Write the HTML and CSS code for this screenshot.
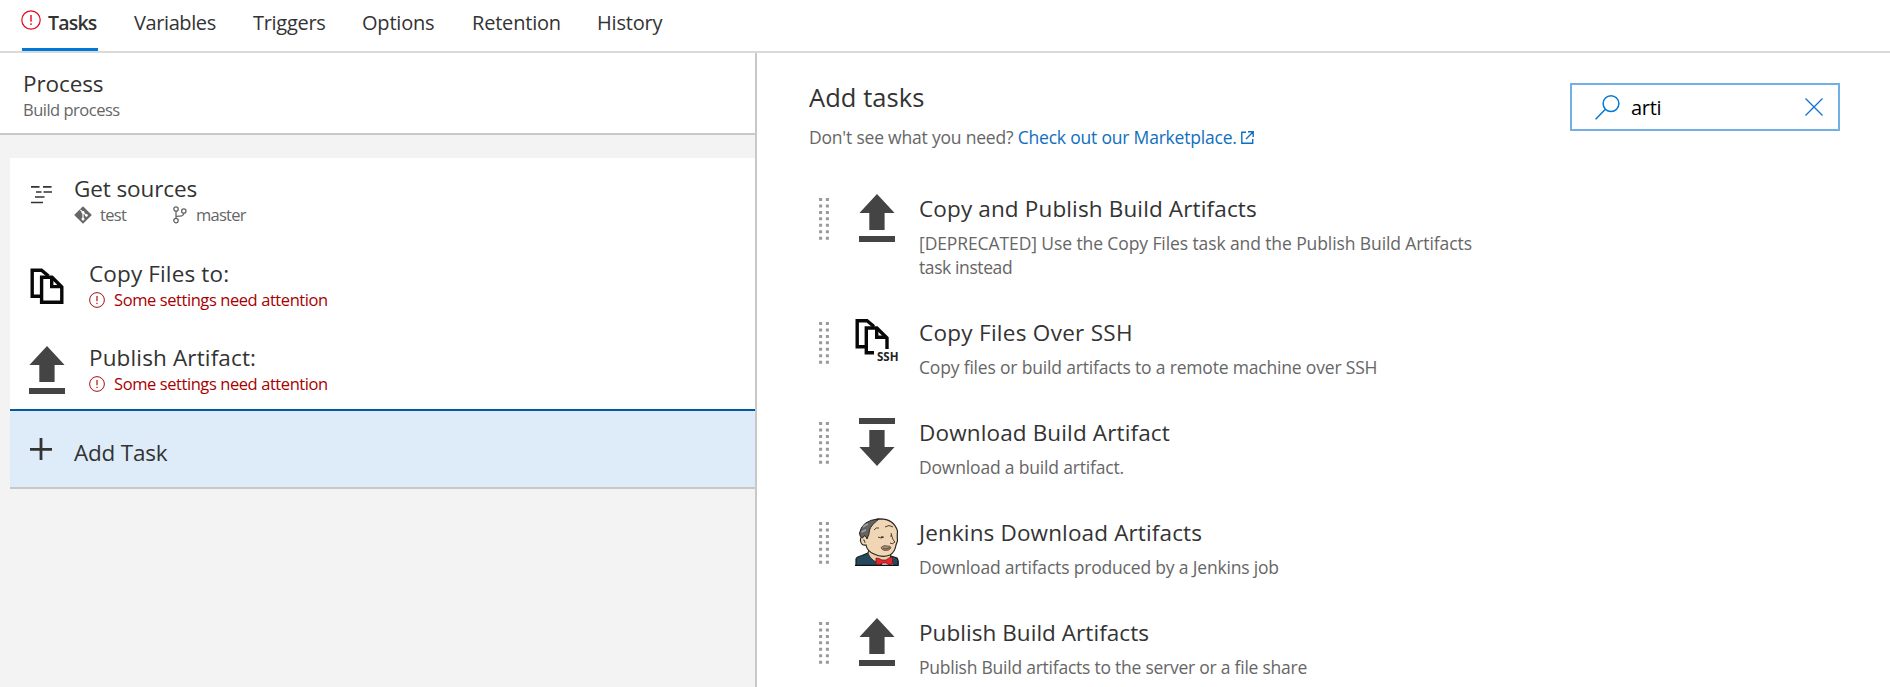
FILE: index.html
```html
<!DOCTYPE html>
<html lang="en">
<head>
<meta charset="utf-8">
<title>Build definition</title>
<link rel="stylesheet" href="styles.css">
</head>
<body>
<svg class="defs" width="0" height="0" aria-hidden="true">
  <symbol id="alert" viewBox="0 0 20 20"><circle cx="10" cy="10" r="9.2" fill="none" stroke="currentColor" stroke-width="1.2"/><path d="M10 5v6.7M10 13.3v1.7" stroke="currentColor" stroke-width="1.4"/></symbol>
  <symbol id="upload" viewBox="0 0 36 48"><path fill="#444" d="M18 0 35.6 19H25.6V36H10.3V19H.4zM0 42H36V48H0z"/></symbol>
  <symbol id="download" viewBox="0 0 36 48"><path fill="#444" d="M18 48 35.6 29H25.6V12H10.3V29H.4zM0 0H36V6H0z"/></symbol>
  <symbol id="copy" viewBox="0 0 34 37"><g fill="none" stroke="#080808" stroke-width="3.4"><path d="M10 28.2H2.2V2.2H11.5L18.5 8"/><path d="M11.6 9.2H22L31.8 19V34.3H11.6z"/><path d="M21.7 9.5V18.6H31.5"/></g></symbol>
  <symbol id="grip" viewBox="0 0 10 43"><path stroke="#999" stroke-width="3" stroke-dasharray="3 3.45" d="M1.6 0V43M8.4 0V43"/></symbol>
</svg>

<nav class="tabs">
  <a class="tab tab-tasks"><svg class="tab-alert"><use href="#alert"/></svg><span>Tasks</span></a>
  <a class="tab tab-variables">Variables</a>
  <a class="tab tab-triggers">Triggers</a>
  <a class="tab tab-options">Options</a>
  <a class="tab tab-retention">Retention</a>
  <a class="tab tab-history">History</a>
</nav>

<main class="editor">
  <section class="pipeline">
    <header class="process">
      <div class="title plain">Process</div>
      <div class="sub">Build process</div>
    </header>
    <div class="steps">
      <div class="step sources">
        <svg class="sources-icon" viewBox="0 0 21 19"><path d="M0 1.8H8.5M12 1.8H20.5M5 7H10.5M12.5 7H21M4 12H13.5M0 17.5H12" stroke="#333" stroke-width="1.7"/></svg>
        <div>
          <div class="title plain">Get sources</div>
          <div class="sub repo">
            <svg class="git-icon" viewBox="0 0 18 18"><path fill="#666" d="M9 .2 17.8 9 9 17.8.2 9z"/><path d="M6.4 3.8 9 6.4V13M9 6.5 12.4 9.4" fill="none" stroke="#fff" stroke-width="1.2"/><circle cx="9" cy="6.3" r="1.4" fill="#fff"/><circle cx="9" cy="13" r="1.5" fill="#fff"/><circle cx="12.4" cy="9.4" r="1.4" fill="#fff"/></svg>
            <span class="repo-name">test</span>
            <svg class="branch-icon" viewBox="0 0 14 18"><g fill="none" stroke="#666" stroke-width="1.3"><circle cx="3" cy="3" r="2.2"/><circle cx="3" cy="14.6" r="2.2"/><circle cx="10.8" cy="5" r="2.2"/><path d="M3 5.2V12.4M10.8 7.2C10.8 10.3 8 10.3 3.2 10.3"/></g></svg>
            <span class="branch-name">master</span>
          </div>
        </div>
      </div>
      <div class="step">
        <svg class="step-icon copy-step"><use href="#copy"/></svg>
        <div>
          <div class="title">Copy Files to:</div>
          <div class="sub warn"><svg class="warn-icon"><use href="#alert"/></svg>Some settings need attention</div>
        </div>
      </div>
      <div class="step">
        <svg class="step-icon publish-step"><use href="#upload"/></svg>
        <div>
          <div class="title">Publish Artifact:</div>
          <div class="sub warn"><svg class="warn-icon"><use href="#alert"/></svg>Some settings need attention</div>
        </div>
      </div>
      <div class="add-task">
        <svg class="plus" viewBox="0 0 22 22"><path d="M0 11.4H22M11 0V22" stroke="#333" stroke-width="2.8"/></svg>
        <div class="title plain">Add Task</div>
      </div>
    </div>
  </section>

  <section class="catalog">
    <header class="catalog-head">
      <div>
        <h1>Add tasks</h1>
        <p class="hint">Don't see what you need? <a>Check out our Marketplace.<svg class="external" viewBox="0 0 13 13"><path d="M5 1.3H.8V12.2H11.7V8M7 .8H12.2V6M12 1 5 8" fill="none" stroke="currentColor" stroke-width="1.4"/></svg></a></p>
      </div>
      <div class="search">
        <svg class="glass" viewBox="0 0 25 25"><g fill="none" stroke="#0078d7" stroke-width="1.5"><circle cx="16" cy="8.6" r="7.9"/><path d="M10.4 14.3.6 24.2"/></g></svg>
        <span>arti</span>
        <svg class="clear" viewBox="0 0 18 18"><path d="M.5.5 17.5 17.5M17.5.5.5 17.5" stroke="#0f6fd0" stroke-width="1.2"/></svg>
      </div>
    </header>

    <article class="task">
      <svg class="grip"><use href="#grip"/></svg>
      <svg class="task-icon"><use href="#upload"/></svg>
      <div><div class="title">Copy and Publish Build Artifacts</div>
      <p class="desc long">[DEPRECATED] Use the Copy Files task and the Publish Build Artifacts<br><span class="tight">task instead</span></p></div>
    </article>
    <article class="task">
      <svg class="grip"><use href="#grip"/></svg>
      <svg class="ssh-icon" viewBox="0 0 44 48"><g fill="none" stroke="#080808" stroke-width="3.4"><path d="M10 28.7H2.2V2.7H12L19 8.5"/><path d="M19 34.8H11.3V10H21.8L32 20V31"/><path d="M21.7 10V19.2H31.5"/></g><text x="22" y="43" textLength="21.500" lengthAdjust="spacingAndGlyphs" class="ssh-text">SSH</text></svg>
      <div><div class="title wide">Copy Files Over SSH</div>
      <p class="desc">Copy files or build artifacts to a remote machine over SSH</p></div>
    </article>
    <article class="task">
      <svg class="grip"><use href="#grip"/></svg>
      <svg class="task-icon"><use href="#download"/></svg>
      <div><div class="title">Download Build Artifact</div>
      <p class="desc">Download a build artifact.</p></div>
    </article>
    <article class="task">
      <svg class="grip"><use href="#grip"/></svg>
      <svg class="jenkins-icon" viewBox="0 0 44 48">
        <path d="M1 47.5V41Q2 38.5 7 37.5L15 34 36 38 42 40Q44 43 43 47.5z" fill="#24495f" stroke="#181818" stroke-width="1.2"/>
        <path d="M14 29 13 36Q17 44 27 46L36 43 35 34z" fill="#e9cfac" stroke="#2b2622"/>
        <path d="M9 18Q5 18 5.500 23 6.500 28 11 27 12 33 19 36 27 40 35 37 40 34 41 27L42.500 23Q42 18 42.500 13 39 1 25 .8 12 1 9 18z" fill="#f0d6b4" stroke="#2b2622" stroke-width="1.2"/>
        <path d="M24 1Q7 2 4.500 15 4.500 19 7.500 20L9.500 17.500Q11.500 18.500 12 21 14.500 16 14.500 12 16 7 24 1z" fill="#646464" stroke="#252525"/>
        <path d="M8 9Q10 7 13 6M6.500 14 11 12" fill="none" stroke="#a5a5a5" stroke-width="1.4"/>
        <path d="M19 12Q21 9 24 10M30 9Q34 6 38 9M23 19Q26 21 29 19M36 15Q38 23 40 24 37 27 35 25M8 22Q10 21 10 25" fill="none" stroke="#3c3028" stroke-width=".9"/>
        <path d="M26 29.500Q29 26.500 32 28 36 27.500 36 30 34 33 30 32.500 26.500 32 26 29.500z" fill="#a88c74" stroke="#5c4a3e" stroke-width=".8"/>
        <path d="M28 30.700Q32 31.500 35 29.700" fill="none" stroke="#4a3a30" stroke-width=".8"/><circle cx="27" cy="19" r=".9" fill="#333"/><circle cx="36" cy="18" r=".8" fill="#333"/>
        <path d="M27 47.500V42L36 41 38 47.500z" fill="#e8eaec"/>
        <path d="M21 40Q24 40 27 42L31 42Q36 38 37.500 40V46Q34 48 31 45L28 45Q24 48 21 47z" fill="#e3272c" stroke="#7a1519" stroke-width=".8"/>
        <path d="M0 47.400H43.500" stroke="#111" stroke-width="1.4"/>
      </svg>
      <div><div class="title">Jenkins Download Artifacts</div>
      <p class="desc">Download artifacts produced by a Jenkins job</p></div>
    </article>
    <article class="task">
      <svg class="grip"><use href="#grip"/></svg>
      <svg class="task-icon"><use href="#upload"/></svg>
      <div><div class="title snug">Publish Build Artifacts</div>
      <p class="desc snug">Publish Build artifacts to the server or a file share</p></div>
    </article>
  </section>
</main>
</body>
</html>
```
FILE: styles.css
```css
*{box-sizing:border-box}
body{margin:0;height:687px;overflow:hidden;display:flex;flex-direction:column;background:#fff;color:#333;font-family:"Open Sans","Noto Sans",sans-serif}
svg{display:block;flex:none;overflow:visible}
.defs{display:none}
h1,p{margin:0;font-weight:400}

.tabs{height:53px;flex:none;display:flex;gap:36px;padding:8px 0 0 22px;border-bottom:2px solid #d9d9d9}
.tab{height:43px;font-size:20px;line-height:30px;letter-spacing:-.2px;white-space:nowrap}
.tab-tasks{width:76px;display:flex;gap:7px;border-bottom:3px solid #0078d7;font-size:19.5px;font-weight:600;letter-spacing:-.8px}
.tab-alert{width:20px;height:20px;margin:2px 0 0 -1px;color:#e00b1c}
.tab-variables{width:83px;letter-spacing:-.4px}
.tab-triggers{width:73px;letter-spacing:-.3px}
.tab-options{width:74px}
.tab-retention{width:89px}
.tab-history{width:66px}

.editor{flex:1;min-height:0;display:flex}
.pipeline{width:757px;flex:none;border-right:2px solid #c8c8c8;background:#f3f3f3}
.process{height:82px;padding:17px 0 0 23px;background:#fff;border-bottom:2px solid #c8c8c8}
.title{font-size:22.5px;line-height:28px;letter-spacing:.14px;white-space:nowrap}
.title.plain{letter-spacing:-.1px}
.title.wide{letter-spacing:.28px}
.title.snug{letter-spacing:.05px}
.sub{font-size:16.5px;line-height:24px;letter-spacing:-.5px;color:#666;white-space:nowrap}
.steps{margin:23px 0 0 10px;background:#fff}
.step{height:84px;padding:17px 0 0 18px;display:flex}
.step>div{margin-left:6px}
.step.sources{height:85px}
.sources .sources-icon{width:21px;height:19px;margin:10px 17px 0 3px}
.step.sources>div{margin-left:5px}
.repo{display:flex;align-items:center}
.git-icon{width:18px;height:18px;margin-right:8px}
.repo-name{width:73px;letter-spacing:-.7px}
.branch-icon{width:14px;height:18px;margin-right:9px}
.branch-name{letter-spacing:-.75px}
.copy-step{width:34px;height:37px;margin:8px 19px 0 2px}
.publish-step{width:36px;height:48px;margin:2px 18px 0 1px}
.warn{display:flex;align-items:center;color:#a80000;letter-spacing:-.42px}
.warn-icon{width:16px;height:16px;margin-right:9px}
.step:nth-child(3){height:82px}
.add-task{height:80px;padding:27px 0 0 20px;display:flex;background:#deecf9;border-top:2px solid #005a9e;border-bottom:2px solid #c8c8c8}
.plus{width:22px;height:22px;margin-right:22px}
.add-task .title{margin-top:1px;letter-spacing:-.2px}

.catalog{flex:1;padding:27px 50px 0 52px}
.catalog-head{height:106px;display:flex;justify-content:space-between}
h1{font-size:25.5px;line-height:34px;letter-spacing:.05px}
.hint{margin-top:11px;font-size:17.5px;line-height:24px;letter-spacing:-.2px;color:#666}
.hint a{color:#106ebe}
.external{display:inline-block;width:13px;height:13px;margin-left:4px}
.search{width:270px;height:48px;margin-top:3px;padding:0 15px 0 23px;display:flex;align-items:center;border:2px solid #71afe5;color:#000;font-size:20px;letter-spacing:-.3px}
.glass{width:25px;height:25px;margin-right:11px}
.clear{width:18px;height:18px;margin-left:auto}

.task{padding:7px 0 31px 10px;display:flex}
.task:last-child{padding-bottom:0}
.task .title{line-height:30px;padding-top:1px}
.task>div{margin-left:24px}
.grip{width:10px;height:43px;margin-top:5px}
.task-icon{width:36px;height:48px;margin:1px 0 0 30px}
.ssh-icon,.jenkins-icon{width:44px;height:48px;margin:1px -4px 0 26px}
.ssh-text{font:700 12.5px "Open Sans",sans-serif;fill:#222}
.desc{margin-top:7px;font-size:17.5px;line-height:24px;letter-spacing:-.18px;color:#666;white-space:nowrap}
.desc.long{letter-spacing:-.1px}
.desc.snug{letter-spacing:-.24px}
.tight{letter-spacing:-.4px}
```
